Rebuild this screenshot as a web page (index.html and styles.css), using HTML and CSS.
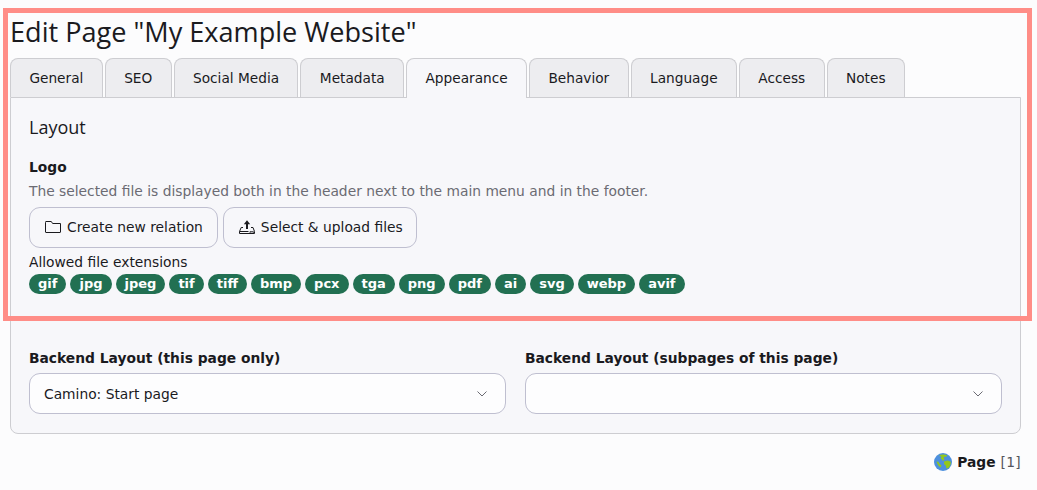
FILE: index.html
```html
<!DOCTYPE html>
<html lang="en">
<head>
<meta charset="utf-8">
<title>Edit Page</title>
<link rel="stylesheet" href="styles.css">
</head>
<body>
<div class="highlight"></div>
<h1 class="title">Edit Page "My Example Website"</h1>
<ul class="tabs">
  <li class="tab">General</li>
  <li class="tab">SEO</li>
  <li class="tab">Social Media</li>
  <li class="tab">Metadata</li>
  <li class="tab active">Appearance</li>
  <li class="tab">Behavior</li>
  <li class="tab">Language</li>
  <li class="tab">Access</li>
  <li class="tab">Notes</li>
</ul>
<main class="panel">
  <h2 class="section-title">Layout</h2>
  <label class="field-label logo-label">Logo</label>
  <p class="description">The selected file is displayed both in the header next to the main menu and in the footer.</p>
  <div class="buttons">
    <button class="btn" type="button">
      <svg class="icon" viewBox="0 0 16 16" width="16" height="16" fill="none" stroke="#1a1a1e" stroke-width="1"><path d="M.5 3.500v9.500a.5.5 0 0 0 .5.5h14a.5.5 0 0 0 .5-.5V4.500H7.600L6.300 2.500H1a.5.5 0 0 0-.5.5z"/></svg>
      <span>Create new relation</span>
    </button>
    <button class="btn" type="button">
      <svg class="icon" viewBox="0 0 16 16" width="16" height="16" fill="none" stroke="#1a1a1e" stroke-width="1"><path d="M4 8.500H2.200L.5 12.500v2h15v-2"/><path d="M.5 12.500h9"/><path d="M12 8.500h2l1.500 4"/><path d="M8 10V4" stroke-width="2"/><path d="M4.800 5.200 8 1.200l3.200 4z" fill="#1a1a1e" stroke="none"/><path d="M11 12.500h3.400v1.600H11z" stroke-width=".7"/></svg>
      <span>Select &amp; upload files</span>
    </button>
  </div>
  <div class="ext-label">Allowed file extensions</div>
  <div class="badges">
    <span class="badge">gif</span><span class="badge">jpg</span><span class="badge">jpeg</span><span class="badge">tif</span><span class="badge">tiff</span><span class="badge">bmp</span><span class="badge">pcx</span><span class="badge">tga</span><span class="badge">png</span><span class="badge">pdf</span><span class="badge">ai</span><span class="badge">svg</span><span class="badge">webp</span><span class="badge">avif</span>
  </div>
  <div class="selects">
    <div class="select-field">
      <label class="field-label">Backend Layout (this page only)</label>
      <div class="select">
        <span>Camino: Start page</span>
        <svg class="chevron" viewBox="0 0 10 6" width="10" height="6" fill="none" stroke="#6b6b73" stroke-width="1"><path d="M.5.5 5 5 9.500.5"/></svg>
      </div>
    </div>
    <div class="select-field">
      <label class="field-label">Backend Layout (subpages of this page)</label>
      <div class="select">
        <span></span>
        <svg class="chevron" viewBox="0 0 10 6" width="10" height="6" fill="none" stroke="#6b6b73" stroke-width="1"><path d="M.5.5 5 5 9.500.5"/></svg>
      </div>
    </div>
  </div>
</main>
<footer class="footer">
  <svg class="globe" viewBox="0 0 18 18" width="18" height="18"><circle cx="9" cy="9" r="9" fill="#4d90de"/><path d="M5 2.500C7.500 1 11 1 13.500 2.500l-1.500 1.200-1.800.1-.5 1.400.8 1.600-1.700 1.200-.8-1.700-1.500-.6 1-1.900z" fill="#93c81c"/><path d="M10 8.500 13.500 7.500l3.300 1.200c.1 2.800-1 5-2.500 6.300l-1.800.5-.8-3-1.700-1.500z" fill="#93c81c"/><path d="M2.500 8.500l1.800.3 1.500 2.500 1.700 1-.7 2.200-1.800-1.300L3.500 11z" fill="#93c81c"/></svg>
  <strong class="footer-name">Page</strong>
  <span class="footer-id">[1]</span>
</footer>
</body>
</html>
```
FILE: styles.css
```css
* {
  box-sizing: border-box;
}

html,
body {
  height: 100%;
}

body {
  margin: 0;
  padding: 16px 16px 0 10px;
  background: #fcfcfd;
  color: #1a1a1e;
  font-family: "DejaVu Sans", sans-serif;
  font-size: 13.82px;
  line-height: 16px;
  overflow: hidden;
  position: relative;
}

.highlight {
  position: absolute;
  left: 3px;
  top: 8px;
  width: 1029px;
  height: 313px;
  border: 5px solid #ff8d87;
  pointer-events: none;
  z-index: 2;
}

.title {
  margin: 0;
  font-family: "Open Sans", sans-serif;
  font-size: 27.1px;
  font-weight: 400;
  line-height: 32px;
  height: 42px;
}

.tabs {
  display: flex;
  gap: 2px;
  margin: 0;
  padding: 0;
  list-style: none;
  height: 40px;
  position: relative;
  z-index: 1;
}

.tab {
  height: 39px;
  padding: 11px 18.4px 0;
  background: #ededf0;
  border: 1px solid #cdcdd1;
  border-bottom: 0;
  border-radius: 8px 8px 0 0;
  font-size: 13.7px;
}

.tab.active {
  height: 40px;
  background: #f7f7fa;
}

.panel {
  height: 337px;
  margin-top: -1px;
  padding: 19px 18px 0;
  background: #f7f7fa;
  border: 1px solid #cdcdd1;
  border-radius: 0 0 8px 8px;
}

.section-title {
  margin: 0;
  font-family: "Open Sans", sans-serif;
  font-size: 18px;
  font-weight: 400;
  line-height: 20px;
}

.field-label {
  display: block;
  font-weight: 700;
  line-height: 16px;
}

.logo-label {
  margin-top: 22px;
}

.description {
  margin: 8px 0 0;
  color: #6b6b73;
  line-height: 16px;
}

.buttons {
  display: flex;
  gap: 5px;
  margin-top: 8px;
}

.btn {
  display: flex;
  align-items: center;
  gap: 6px;
  height: 41px;
  padding: 0 14px 2px 15px;
  background: transparent;
  border: 1px solid #bfbfd0;
  border-radius: 11px;
  color: #1a1a1e;
  font: inherit;
}

.btn:last-child {
  padding-right: 13px;
}

.ext-label {
  margin-top: 6px;
}

.badges {
  display: flex;
  gap: 4px;
  margin-top: 4px;
}

.badge {
  height: 20px;
  padding: 0 9px;
  background: #227052;
  border-radius: 10px;
  color: #fff;
  font-size: 13px;
  font-weight: 700;
  line-height: 19px;
}

.selects {
  display: grid;
  grid-template-columns: 1fr 1fr;
  gap: 19px;
  margin-top: 56px;
}

.field-label + .select {
  margin-top: 7px;
}

.select {
  display: flex;
  align-items: center;
  justify-content: space-between;
  height: 41px;
  padding: 0 18.500px 0 14px;
  background: #fdfdfe;
  border: 1px solid #bfbfd0;
  border-radius: 11px;
}

.footer {
  display: flex;
  align-items: center;
  justify-content: flex-end;
  gap: 5px;
  margin-top: 19px;
}

.footer-id {
  color: #55555c;
  letter-spacing: .3px;
}
```
